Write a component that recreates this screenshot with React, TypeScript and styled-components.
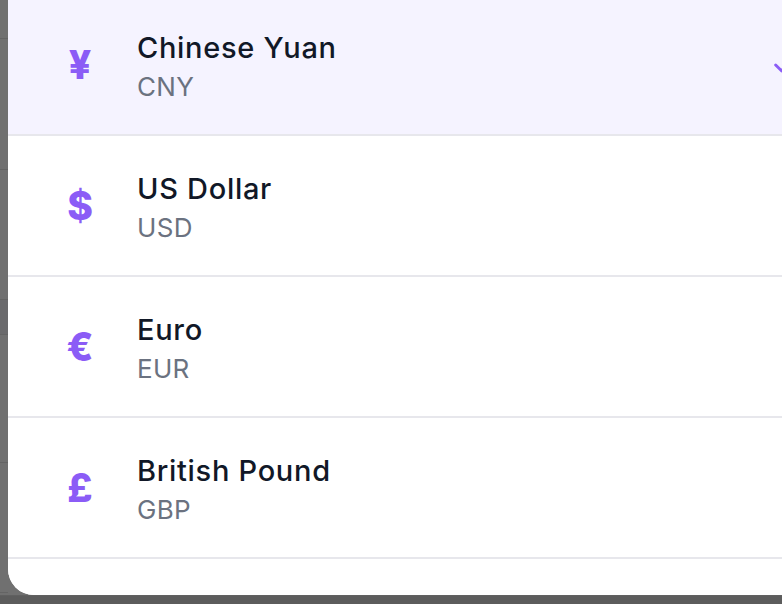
import React from "react";
import styled, { createGlobalStyle } from "styled-components";
import { Check } from "lucide-react";

const Global = createGlobalStyle`
  html, body { margin: 0; padding: 0; }
  body {
    background: #707070;
    overflow: hidden;
    font-family: Inter, "Noto Sans", "Liberation Sans", sans-serif;
    -webkit-font-smoothing: antialiased;
  }
`;

const Screen = styled.div`
  width: 782px;
  height: 604px;
  display: grid;
  grid-template-columns: 8px 1fr;
  grid-template-rows: 595px 9px;
  overflow: hidden;
`;

const Backdrop = styled.div`
  display: flex;
  flex-direction: column;
  background: #707070;
`;

const BackdropRow = styled.div<{ $h: number; $dark?: boolean }>`
  flex: none;
  height: ${(p) => p.$h}px;
  background: ${(p) => (p.$dark ? "#6a6a6c" : "#707070")};
  border-bottom: 1px solid #646464;
`;

const SheetArea = styled.div`
  overflow: hidden;
  background: #707070;
`;

const Sheet = styled.div`
  width: 828px;
  height: 600px;
  margin-top: -5px;
  background: #ffffff;
  border-bottom-left-radius: 26px;
  overflow: hidden;
  display: flex;
  flex-direction: column;
`;

const Row = styled.div<{ $selected?: boolean }>`
  flex: none;
  height: 141px;
  box-sizing: border-box;
  border-bottom: 2px solid #e7e7ec;
  background: ${(p) => (p.$selected ? "#f5f3ff" : "#ffffff")};
  display: flex;
  align-items: center;
  padding: 0 37px 0 42px;
`;

const Symbol = styled.div`
  flex: none;
  width: 60px;
  text-align: center;
  color: #8b5cf6;
  font-size: 39px;
  font-weight: 800;
  line-height: 1;
`;

const Labels = styled.div`
  flex: 1;
  margin-left: 27px;
  padding-top: 3px;
  display: flex;
  flex-direction: column;
  gap: 7px;
`;

const Name = styled.div`
  color: #111827;
  font-size: 29px;
  font-weight: 500;
  letter-spacing: 0.7px;
  line-height: 34px;
`;

const Code = styled.div`
  color: #6b7280;
  font-size: 26px;
  font-weight: 400;
  letter-spacing: 0.3px;
  line-height: 30px;
`;

const Tick = styled(Check)`
  flex: none;
  color: #8b5cf6;
`;

const BottomBar = styled.div`
  grid-column: 1 / span 2;
  background: #5c5c5c;
  border-top: 1px solid #606060;
`;

const currencies = [
  { symbol: "¥", name: "Chinese Yuan", code: "CNY", selected: true },
  { symbol: "$", name: "US Dollar", code: "USD" },
  { symbol: "€", name: "Euro", code: "EUR" },
  { symbol: "£", name: "British Pound", code: "GBP" },
  { symbol: "", name: "", code: "" },
];

export default function App() {
  return (
    <>
      <Global />
      <Screen>
        <Backdrop>
          <BackdropRow $h={38} />
          <BackdropRow $h={130} />
          <BackdropRow $h={129} />
          <BackdropRow $h={34} $dark />
          <BackdropRow $h={127} />
          <BackdropRow $h={129} />
        </Backdrop>
        <SheetArea>
          <Sheet>
            {currencies.map((c, i) => (
              <Row key={i} $selected={c.selected}>
                {c.name && (
                  <>
                    <Symbol>{c.symbol}</Symbol>
                    <Labels>
                      <Name>{c.name}</Name>
                      <Code>{c.code}</Code>
                    </Labels>
                    {c.selected && <Tick size={28} strokeWidth={2.5} />}
                  </>
                )}
              </Row>
            ))}
          </Sheet>
        </SheetArea>
        <BottomBar />
      </Screen>
    </>
  );
}
